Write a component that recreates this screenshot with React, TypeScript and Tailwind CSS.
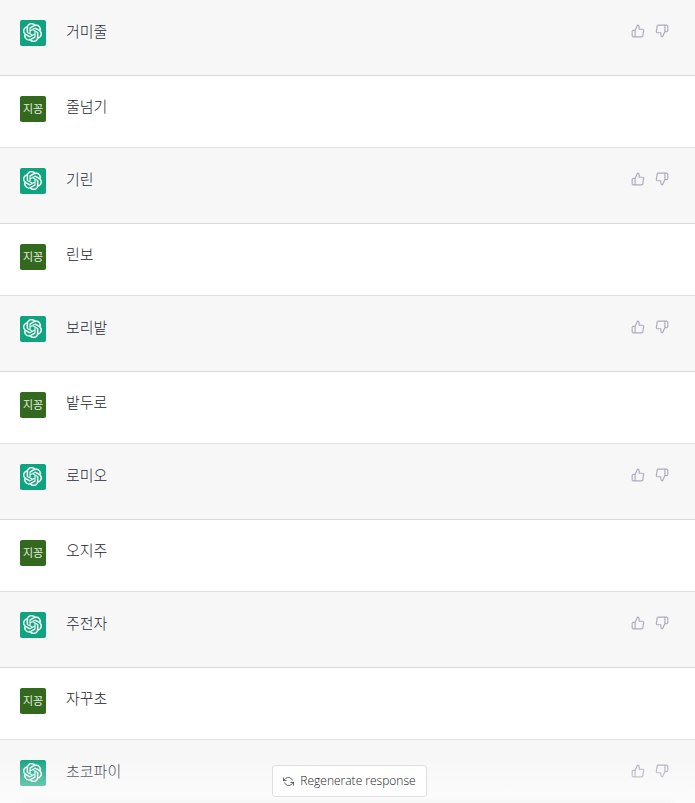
import { FiRefreshCcw, FiThumbsDown, FiThumbsUp } from "react-icons/fi";
import { SiOpenai } from "react-icons/si";

type Message = { role: "assistant" | "user"; text: string };

const messages: Message[] = [
  { role: "assistant", text: "거미줄" },
  { role: "user", text: "줄넘기" },
  { role: "assistant", text: "기린" },
  { role: "user", text: "린보" },
  { role: "assistant", text: "보리밭" },
  { role: "user", text: "밭두로" },
  { role: "assistant", text: "로미오" },
  { role: "user", text: "오지주" },
  { role: "assistant", text: "주전자" },
  { role: "user", text: "자꾸초" },
  { role: "assistant", text: "초코파이" },
];

function AssistantRow({ text }: { text: string }) {
  return (
    <li className="flex h-[76px] items-start border-b border-[#d9d9dc] bg-[#f7f7f8] px-5 pt-5">
      <span className="flex size-[26px] shrink-0 items-center justify-center rounded-[2px] bg-[#10a37f] pr-px pb-px text-white">
        <SiOpenai size={19} stroke="currentColor" strokeWidth={0.3} aria-hidden="true" />
      </span>
      <p className="ml-5 flex-1 text-[15px] leading-[22px] font-light text-[#1f2937]">{text}</p>
      <div className="mt-1 mr-1.5 flex gap-2.5 text-[#acacbe]">
        <button type="button" aria-label="Good response">
          <FiThumbsUp size={14} />
        </button>
        <button type="button" aria-label="Bad response">
          <FiThumbsDown size={14} />
        </button>
      </div>
    </li>
  );
}

function UserRow({ text }: { text: string }) {
  return (
    <li className="flex h-[72px] items-start border-b border-[#dfdfe2] bg-white px-5 pt-5">
      <span className="flex size-[26px] shrink-0 items-center justify-center rounded-[2px] bg-[#33691e] pb-px text-[11px] leading-none text-[#e4ece0]">
        지꽁
      </span>
      <p className="ml-5 flex-1 text-[15px] leading-5 font-light text-[#1c1d2b]">{text}</p>
    </li>
  );
}

export default function App() {
  return (
    <main className="relative h-screen overflow-hidden bg-white font-['Noto_Sans_CJK_KR',sans-serif]">
      <ul>
        {messages.map((m) =>
          m.role === "assistant" ? (
            <AssistantRow key={m.text} text={m.text} />
          ) : (
            <UserRow key={m.text} text={m.text} />
          ),
        )}
      </ul>
      <div className="pointer-events-none absolute inset-x-0 bottom-0 flex flex-col items-center bg-linear-to-b from-white/0 to-white/60 pt-2">
        <button
          type="button"
          className="pointer-events-auto mb-1.5 ml-1 flex h-8 items-center gap-1.5 rounded-[3px] border border-[#e0e0e4] bg-white px-2.5 font-['Open_Sans',sans-serif] text-[12px] font-light text-[#202123]"
        >
          <FiRefreshCcw size={11} strokeWidth={1.5} />
          Regenerate response
        </button>
        <div className="w-full px-6">
          <div className="shadow-[0_0_5px_1px_rgba(0,0,0,0.08)]" />
        </div>
      </div>
    </main>
  );
}
